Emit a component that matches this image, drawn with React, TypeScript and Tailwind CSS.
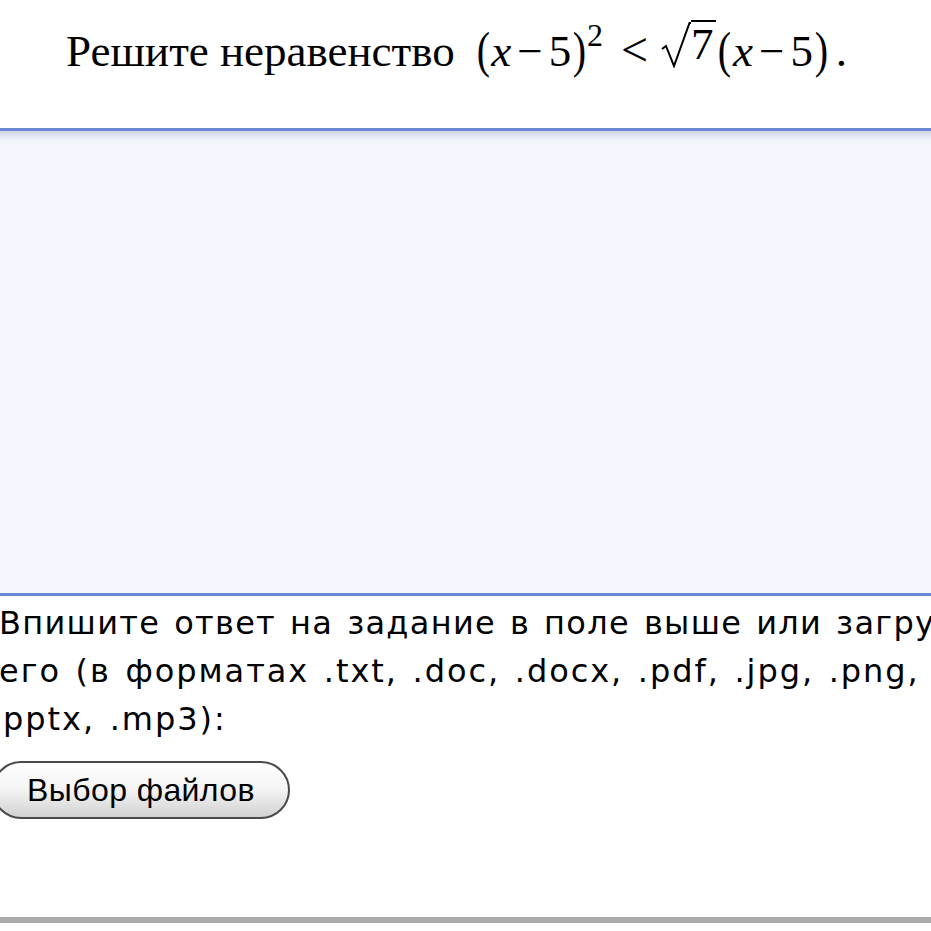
import React from "react";

function Paren({ c }: { c: string }) {
  return (
    <span className="text-[50px] leading-none relative top-[1px] scale-x-[0.8] inline-block">{c}</span>
  );
}

export default function App() {
  return (
    <div className="w-[931px] h-[931px] overflow-hidden bg-white relative">
      {/* Problem statement */}
      <div className="h-[128px] pl-[66px] pt-[20px] flex items-start">
        <div
          className="flex items-baseline text-[45px] leading-[60px] text-black whitespace-nowrap"
          style={{ fontFamily: '"Liberation Serif", "Times New Roman", serif' }}
        >
          <span>Решите неравенство</span>
          <span className="ml-[20px] flex items-baseline">
            <Paren c="(" />
            <span className="italic ml-[0px]">x</span>
            <span className="mx-[6px]">−</span>
            <span>5</span>
            <Paren c=")" />
            <span className="text-[32px] relative -top-[20px] -ml-[1px]">2</span>
            <span className="ml-[18px] mr-[13px] text-[48px]">&lt;</span>
            <span className="flex items-end">
              <svg width="30" height="46" viewBox="0 0 30 46" className="relative top-[2px]">
                <polyline
                  points="1,27 5,24 13,44 28.5,1 30,1"
                  fill="none"
                  stroke="black"
                  strokeWidth="2"
                  strokeLinejoin="miter"
                />
              </svg>
              <span className="border-t-[2px] border-black leading-[44px] pr-[3px]">7</span>
            </span>
            <Paren c="(" />
            <span className="italic ml-[0px]">x</span>
            <span className="mx-[6px]">−</span>
            <span>5</span>
            <Paren c=")" />
            <span className="ml-[6px]">.</span>
          </span>
        </div>
      </div>

      {/* Answer field */}
      <div className="-mx-[10px] h-[468px] border-t-[3px] border-b-[3px] border-[#6a87d6] bg-[#f4f7fd] shadow-[inset_0_8px_8px_-4px_rgba(120,130,170,0.35)]" />

      {/* Instructions */}
      <div
        className="mt-[3px] text-[32px] leading-[48px] [word-spacing:2.5px] text-black whitespace-nowrap"
        style={{ fontFamily: '"DejaVu Sans", Verdana, sans-serif' }}
      >
        <div className="-ml-[1px] tracking-[1.3px]">Впишите ответ на задание в поле выше или загрузите</div>
        <div className="-ml-[1px] tracking-[1.95px]">его (в форматах .txt, .doc, .docx, .pdf, .jpg, .png, .xls,</div>
        <div className="pl-[3px] tracking-[1.95px]">pptx, .mp3):</div>
      </div>

      {/* File button */}
      <div className="mt-[18px] -ml-[8px]">
        <button
          className="h-[58px] w-[298px] rounded-full border-[2px] border-[#4a4a4a] bg-gradient-to-b from-white via-[#f3f3f3] to-[#d2d2d2] text-[32px] tracking-[0.4px] text-black flex items-center justify-center"
          style={{ fontFamily: '"Liberation Sans", Arial, sans-serif' }}
        >
          Выбор файлов
        </button>
      </div>

      {/* Bottom separator */}
      <div className="absolute left-0 right-0 top-[917px] h-[6px] bg-[#aaaaaa]" />
    </div>
  );
}
